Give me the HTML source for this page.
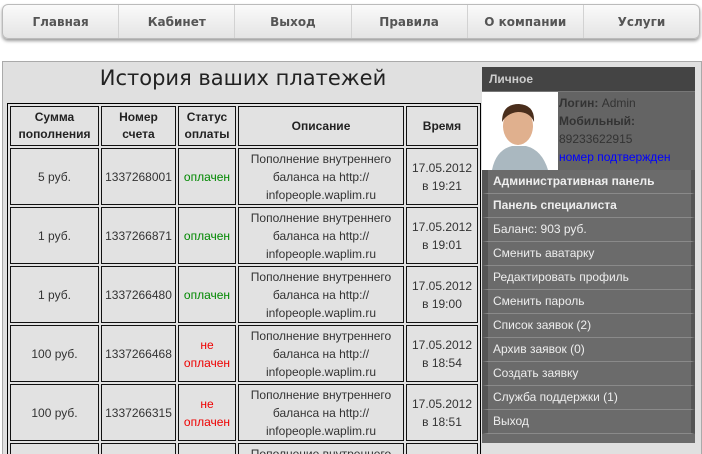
<!DOCTYPE html>
<html><head><meta charset="utf-8"><style>
*{box-sizing:border-box}
html,body{margin:0;width:702px;height:454px;overflow:hidden}
body{background:#fff;font-family:"DejaVu Sans","Liberation Sans",sans-serif;position:relative}
.nav{position:absolute;left:2px;top:4px;width:698px;height:35px;border:1px solid #bbb;border-radius:6px;background:linear-gradient(#fafafa,#e4e4e4);box-shadow:0 2px 3px #999;display:flex}
.nav div{flex:1;text-align:center;line-height:35px;font-size:12px;font-weight:bold;color:#555;border-right:1px solid #d2d2d2}
.nav div:last-child{border:none}
.main{position:absolute;left:2px;top:61px;width:700px;height:400px;background:#e0e0e0;border:1px solid #aaa}
h1{position:absolute;left:0;width:486px;top:66px;margin:0;text-align:center;font-weight:normal;font-size:21px;color:#222;font-family:"DejaVu Sans",sans-serif}
table{position:absolute;left:7px;top:103px;width:474px;table-layout:fixed;border:1px solid #000;border-collapse:separate;border-spacing:2px;background:#e2e2e2;font-family:"Liberation Sans",sans-serif}
td,th{border:1px solid #111;text-align:center;font-size:12px;color:#333;line-height:18px;padding:0}
th{height:40px;line-height:17px;font-weight:bold;color:#222}
td{height:57px}
.g{color:#080}.r{color:#e00}
.side{position:absolute;left:482px;top:67px;width:213px;height:376px;background:#6b6b6b;font-family:"Liberation Sans",sans-serif}
.sh{height:25px;background:#444;color:#ccc;font-weight:bold;font-size:12px;line-height:24px;padding-left:7px;border-bottom:1px solid #777}
.prof{height:78px;background:#646464;position:relative;font-size:12px;color:#333;line-height:18px}
.ph{position:absolute;left:0;top:0;width:76px;height:78px;background:#fff}
.info{position:absolute;left:77px;top:2px}
.menu div{height:24px;line-height:23px;padding-left:5px;font-size:12px;color:#eee;border-bottom:1px solid #8a8a8a;border-left:6px solid #555;border-right:4px solid #555}
</style></head><body>
<div class="nav"><div>Главная</div><div>Кабинет</div><div>Выход</div><div>Правила</div><div>О компании</div><div>Услуги</div></div>
<div class="main"></div>
<h1>История ваших платежей</h1>
<table>
<tr><th style="width:89px">Сумма<br>пополнения</th><th style="width:75px">Номер<br>счета</th><th style="width:58px">Статус<br>оплаты</th><th style="width:166px">Описание</th><th style="width:72px">Время</th></tr>
<tr><td>5 руб.</td><td>1337268001</td><td class="g">оплачен</td><td>Пополнение внутреннего баланса на http:// infopeople.waplim.ru</td><td>17.05.2012<br>в 19:21</td></tr>
<tr><td>1 руб.</td><td>1337266871</td><td class="g">оплачен</td><td>Пополнение внутреннего баланса на http:// infopeople.waplim.ru</td><td>17.05.2012<br>в 19:01</td></tr>
<tr><td>1 руб.</td><td>1337266480</td><td class="g">оплачен</td><td>Пополнение внутреннего баланса на http:// infopeople.waplim.ru</td><td>17.05.2012<br>в 19:00</td></tr>
<tr><td>100 руб.</td><td>1337266468</td><td class="r">не<br>оплачен</td><td>Пополнение внутреннего баланса на http:// infopeople.waplim.ru</td><td>17.05.2012<br>в 18:54</td></tr>
<tr><td>100 руб.</td><td>1337266315</td><td class="r">не<br>оплачен</td><td>Пополнение внутреннего баланса на http:// infopeople.waplim.ru</td><td>17.05.2012<br>в 18:51</td></tr>
<tr><td>100 руб.</td><td>1337266300</td><td class="r">не<br>оплачен</td><td>Пополнение внутреннего баланса на http:// infopeople.waplim.ru</td><td>17.05.2012<br>в 18:50</td></tr>
</table>
<div class="side">
<div class="sh">Личное</div>
<div class="prof"><div class="ph"><svg width="76" height="78"><ellipse cx="36" cy="34" rx="15" ry="19" fill="#e0b08e"/><path d="M20 30 Q20 12 37 12 Q53 13 52 30 Q48 20 36 20 Q25 21 20 30Z" fill="#4a2e1c"/><path d="M10 78 Q14 58 30 54 L44 54 Q60 58 66 78Z" fill="#aab8c0"/></svg></div>
<div class="info"><b>Логин:</b> Admin<br><b>Мобильный:</b><br>89233622915<br><span style="color:#00f">номер подтвержден</span></div></div>
<div class="menu"><div style="font-weight:bold">Административная панель</div><div style="font-weight:bold">Панель специалиста</div><div>Баланс: 903 руб.</div><div>Сменить аватарку</div><div>Редактировать профиль</div><div>Сменить пароль</div><div>Список заявок (2)</div><div>Архив заявок (0)</div><div>Создать заявку</div><div>Служба поддержки (1)</div><div>Выход</div></div>
</div>
</body></html>
